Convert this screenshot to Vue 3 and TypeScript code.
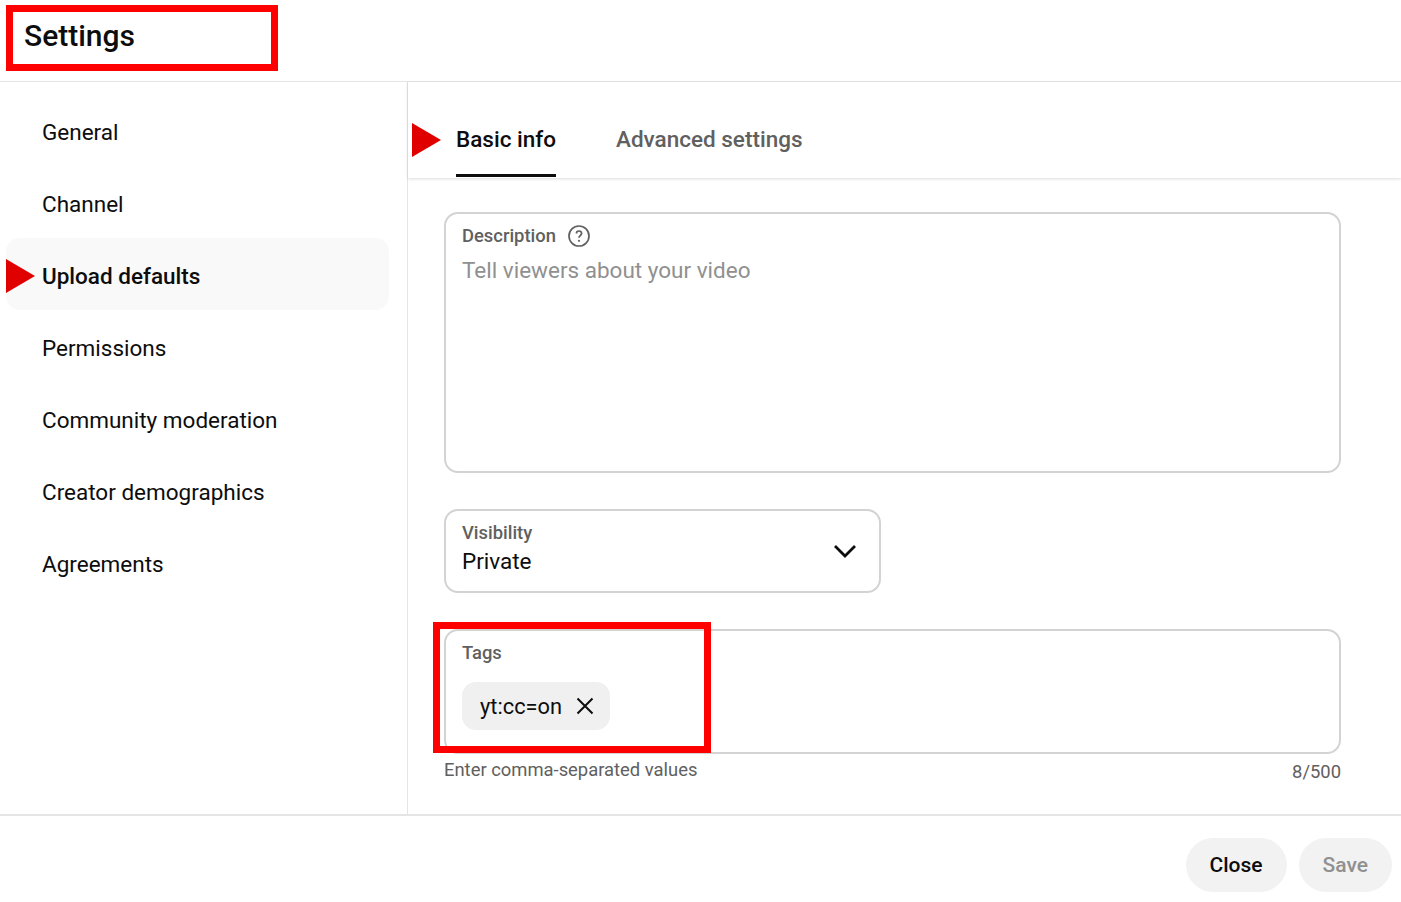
<script setup lang="ts">
const navItems: string[] = [
  "General",
  "Channel",
  "Upload defaults",
  "Permissions",
  "Community moderation",
  "Creator demographics",
  "Agreements",
];
const activeItem = "Upload defaults";
</script>

<template>
  <div class="page">
    <header class="top">
      <h1 class="title">Settings</h1>
      <span class="mark-box mark-title"></span>
    </header>

    <div class="body">
      <nav class="side">
        <a
          v-for="item in navItems"
          :key="item"
          class="side-item"
          :class="{ active: item === activeItem }"
        >
          <span v-if="item === activeItem" class="arrow arrow-side"></span>
          {{ item }}
        </a>
      </nav>

      <main class="main">
        <div class="tabs">
          <span class="arrow arrow-tab"></span>
          <a class="tab selected">Basic info</a>
          <a class="tab">Advanced settings</a>
        </div>

        <div class="form">
          <div class="field field-desc">
            <div class="label">
              Description
              <svg class="help" viewBox="0 0 24 24" width="24" height="24">
                <circle cx="12" cy="12" r="10" fill="none" stroke="#606060" stroke-width="1.7" />
                <path d="M9.4 9.6a2.6 2.6 0 0 1 5.2 0c0 1.9-2.6 2-2.6 4.1" fill="none" stroke="#606060" stroke-width="1.7" />
                <circle cx="12" cy="16.8" r="1.1" fill="#606060" />
              </svg>
            </div>
            <div class="placeholder">Tell viewers about your video</div>
          </div>

          <div class="field field-select">
            <div class="select-text">
              <div class="label">Visibility</div>
              <div class="value">Private</div>
            </div>
            <svg class="chevron" viewBox="0 0 24 16" width="24" height="16">
              <path d="M2 3l10 10L22 3" fill="none" stroke="#0d0d0d" stroke-width="2.8" />
            </svg>
          </div>

          <div class="tags-wrap">
            <div class="field field-tags">
              <div class="label">Tags</div>
              <div class="chip">
                yt:cc=on
                <svg viewBox="0 0 18 18" width="18" height="18">
                  <path d="M1.5 1.5l15 15M16.5 1.5l-15 15" fill="none" stroke="#0d0d0d" stroke-width="2" />
                </svg>
              </div>
            </div>
            <span class="mark-box mark-tags"></span>
          </div>

          <div class="hints">
            <span class="hint-left">Enter comma-separated values</span>
            <span class="hint-right">8/500</span>
          </div>
        </div>
      </main>
    </div>

    <footer class="bottom">
      <button class="btn">Close</button>
      <button class="btn disabled">Save</button>
    </footer>
  </div>
</template>

<style>
html,
body {
  margin: 0;
  background: #fff;
}
</style>

<style scoped>
.page {
  width: 1401px;
  height: 902px;
  display: flex;
  flex-direction: column;
  overflow: hidden;
  font-family: Roboto, "Liberation Sans", sans-serif;
  color: #0d0d0d;
}

.top {
  position: relative;
  box-sizing: border-box;
  padding: 15px 0 0 24px;
  border-bottom: 1px solid #e5e5e5;
  flex: none;
  height: 82px;
}
.title {
  margin: 0;
  font-size: 30px;
  line-height: 42px;
  font-weight: 500;
}
.mark-box {
  position: absolute;
  box-sizing: border-box;
  border: 7px solid #ff0000;
}
.mark-title {
  left: 6px;
  top: 5px;
  width: 272px;
  height: 66px;
}

.body {
  flex: 1;
  display: flex;
  min-height: 0;
}

.side {
  width: 408px;
  flex: none;
  box-sizing: border-box;
  border-right: 1px solid #e5e5e5;
  padding: 12px 18px 0 6px;
}
.side-item {
  position: relative;
  display: flex;
  align-items: center;
  box-sizing: border-box;
  height: 72px;
  padding: 3px 0 0 36px;
  font-size: 22.5px;
  border-radius: 14px;
}
.side-item.active {
  font-weight: 500;
  background: #f9f9f9;
}

.arrow {
  position: absolute;
  width: 0;
  height: 0;
  border-left: 29px solid #e00000;
  border-top: 17px solid transparent;
  border-bottom: 17px solid transparent;
}
.arrow-side {
  left: 0;
  top: 21px;
}
.arrow-tab {
  left: 4px;
  top: 41px;
}

.main {
  flex: 1;
  min-width: 0;
}
.tabs {
  position: relative;
  height: 96px;
  box-sizing: border-box;
  padding-left: 48px;
  display: flex;
  gap: 60px;
  box-shadow: 0 1px 3px rgba(0, 0, 0, 0.14);
}
.tab {
  height: 95px;
  box-sizing: border-box;
  padding-top: 41px;
  font-size: 22.5px;
  line-height: 32px;
  font-weight: 500;
  color: #606060;
}
.tab.selected {
  color: #0d0d0d;
  border-bottom: 3px solid #0d0d0d;
}

.form {
  padding: 34px 60px 0 36px;
}
.field {
  box-sizing: border-box;
  border: 2px solid #d3d3d3;
  border-radius: 14px;
  padding: 10px 16px;
}
.label {
  display: flex;
  align-items: center;
  gap: 11px;
  font-size: 18.4px;
  line-height: 24px;
  font-weight: 500;
  color: #606060;
}
.field-desc {
  height: 261px;
}
.placeholder {
  margin-top: 6px;
  font-size: 22.5px;
  line-height: 32px;
  color: #909090;
}
.field-select {
  width: 437px;
  height: 84px;
  margin-top: 36px;
  padding: 0 22px 0 16px;
  display: flex;
  align-items: center;
  justify-content: space-between;
}
.select-text {
  margin-top: -4px;
}
.value {
  font-size: 22.5px;
  line-height: 32px;
}
.tags-wrap {
  position: relative;
  margin-top: 36px;
}
.field-tags {
  height: 125px;
}
.chip {
  display: inline-flex;
  align-items: center;
  gap: 14px;
  height: 48px;
  margin-top: 17px;
  padding: 0 16px 0 18px;
  border-radius: 14px;
  background: #f0f0f0;
  font-size: 21.8px;
}
.mark-tags {
  left: -11px;
  top: -7px;
  width: 278px;
  height: 131px;
}
.hints {
  display: flex;
  justify-content: space-between;
  margin-top: 4px;
  font-size: 18.4px;
  line-height: 24px;
  color: #606060;
}
.hint-right {
  margin-top: 2px;
}

.bottom {
  flex: none;
  height: 88px;
  box-sizing: border-box;
  border-top: 2px solid #e5e5e5;
  padding: 22px 9px 0 0;
  display: flex;
  justify-content: flex-end;
  gap: 12px;
}
.btn {
  height: 54px;
  padding: 0 24px;
  border: none;
  border-radius: 27px;
  background: #f2f2f2;
  font-family: inherit;
  font-size: 21px;
  font-weight: 500;
  color: #0d0d0d;
}
.btn.disabled {
  color: #909090;
}
</style>
